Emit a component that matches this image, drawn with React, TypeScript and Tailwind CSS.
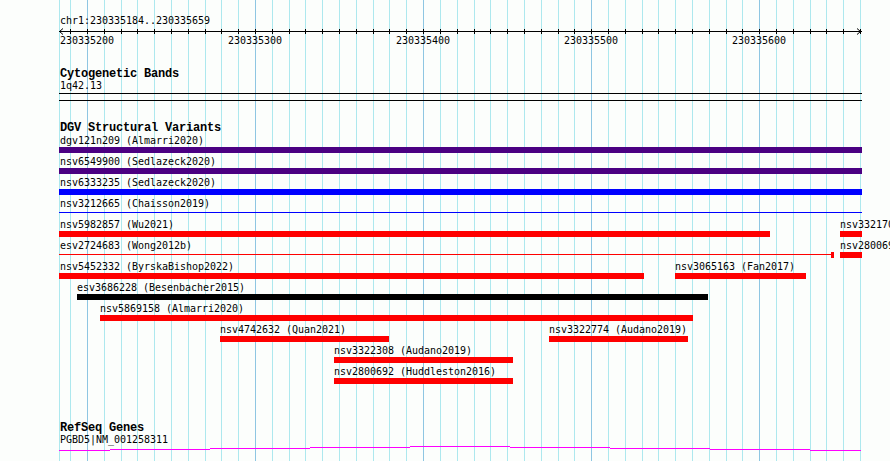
import React from "react";

const MINOR = "#ade8ee";
const MAJOR = "#8ec6e2";

const gridXs = Array.from({ length: 48 }, (_, i) => i - 1).map((k) => ({
  x: Math.floor(87.5 + 16.805 * k),
  major: k % 10 === 0,
}));

type Feat = {
  x1: number;
  x2: number;
  label: string;
  kind: "bar" | "line";
  color: string;
  cap?: number;
};

const rows: Feat[][] = [
  [{ x1: 59, x2: 862, label: "dgv121n209 (Almarri2020)", kind: "bar", color: "#4b0082" }],
  [{ x1: 59, x2: 862, label: "nsv6549900 (Sedlazeck2020)", kind: "bar", color: "#4b0082" }],
  [{ x1: 59, x2: 862, label: "nsv6333235 (Sedlazeck2020)", kind: "bar", color: "#0000ff" }],
  [{ x1: 59, x2: 862, label: "nsv3212665 (Chaisson2019)", kind: "line", color: "#0000ff" }],
  [
    { x1: 59, x2: 770, label: "nsv5982857 (Wu2021)", kind: "bar", color: "#ff0000" },
    { x1: 840, x2: 862, label: "nsv3321700 (Audano2019)", kind: "bar", color: "#ff0000" },
  ],
  [
    { x1: 59, x2: 832, label: "esv2724683 (Wong2012b)", kind: "line", color: "#ff0000", cap: 831 },
    { x1: 840, x2: 862, label: "nsv2800697 (Huddleston2016)", kind: "bar", color: "#ff0000" },
  ],
  [
    { x1: 59, x2: 644, label: "nsv5452332 (ByrskaBishop2022)", kind: "bar", color: "#ff0000" },
    { x1: 675, x2: 806, label: "nsv3065163 (Fan2017)", kind: "bar", color: "#ff0000" },
  ],
  [{ x1: 77, x2: 708, label: "esv3686228 (Besenbacher2015)", kind: "bar", color: "#000000" }],
  [{ x1: 100, x2: 693, label: "nsv5869158 (Almarri2020)", kind: "bar", color: "#ff0000" }],
  [
    { x1: 220, x2: 389, label: "nsv4742632 (Quan2021)", kind: "bar", color: "#ff0000" },
    { x1: 549, x2: 688, label: "nsv3322774 (Audano2019)", kind: "bar", color: "#ff0000" },
  ],
  [{ x1: 334, x2: 513, label: "nsv3322308 (Audano2019)", kind: "bar", color: "#ff0000" }],
  [{ x1: 334, x2: 513, label: "nsv2800692 (Huddleston2016)", kind: "bar", color: "#ff0000" }],
];

const steps: [number, number, number][] = [
  [59, 110, 450],
  [110, 210, 449],
  [210, 310, 448],
  [310, 410, 447],
  [410, 510, 446],
  [510, 610, 447],
  [610, 710, 448],
  [710, 810, 449],
  [810, 861, 450],
];

const rulerLabels = [230335200, 230335300, 230335400, 230335500, 230335600];

const small =
  "h-[12px] leading-[12px] text-[10px] tracking-[-0.02px] whitespace-nowrap font-['DejaVu_Sans_Mono','Liberation_Mono',monospace]";
const bold =
  "h-[12px] leading-[12px] text-[12px] font-bold tracking-[-0.2px] whitespace-nowrap font-['Liberation_Mono','DejaVu_Sans_Mono',monospace]";

function Row({ feats }: { feats: Feat[] }) {
  return (
    <div className="relative h-[21px] w-[803px]">
      {feats.map((f, i) => (
        <React.Fragment key={i}>
          <span
            className={`absolute top-0 ${small}`}
            style={{ left: Math.max(f.x1, 60) - 59 }}
          >
            {f.label}
          </span>
          {f.kind === "bar" ? (
            <div
              className="absolute top-[12px] h-[6px]"
              style={{ left: f.x1 - 59, width: f.x2 - f.x1, background: f.color }}
            />
          ) : (
            <div
              className="absolute top-[14px] h-px"
              style={{ left: f.x1 - 59, width: f.x2 - f.x1, background: f.color }}
            />
          )}
          {f.cap !== undefined && (
            <div
              className="absolute top-[12px] h-[6px] w-[3px]"
              style={{ left: f.cap - 59, background: f.color }}
            />
          )}
        </React.Fragment>
      ))}
    </div>
  );
}

export default function App() {
  return (
    <div className="relative w-[890px] h-[461px] overflow-hidden bg-[#fcfefc] text-black font-['DejaVu_Sans_Mono',monospace]">
      <svg className="absolute inset-0" width={890} height={461}>
        <rect x={59} y={0} width={1} height={461} fill={MINOR} />
        {gridXs.map((g, i) => (
          <rect key={i} x={g.x} y={0} width={1} height={461} fill={g.major ? MAJOR : MINOR} />
        ))}
      </svg>

      <div className="relative flex flex-col pl-[59px] w-[862px]">
        {/* Ruler */}
        <div className="pt-[15px] flex flex-col">
          <div className={`${small} pl-px`}>chr1:230335184..230335659</div>
          <svg className="mt-px" width={803} height={8} viewBox="59 28 803 8" shapeRendering="crispEdges">
            <rect x={59} y={31} width={803} height={1} fill="#000" />
            {gridXs.map((g, i) => (
              <rect key={i} x={g.x} y={29} width={1} height={5} fill="#000" />
            ))}
            <polyline points="63,28.5 59.5,31.5 63,34.5" fill="none" stroke="#000" strokeWidth={1} shapeRendering="auto" />
            <polyline points="857,28.5 860.5,31.5 857,34.5" fill="none" stroke="#000" strokeWidth={1} shapeRendering="auto" />
          </svg>
          <div className="relative h-[12px] w-[803px]">
            {rulerLabels.map((bp, i) => {
              const k = (bp - 230335200) / 10;
              const x = Math.floor(87.5 + 16.805 * k);
              return (
                <span key={i} className={`absolute top-[-1px] ${small}`} style={{ left: x - 27 - 59 }}>
                  {bp}
                </span>
              );
            })}
          </div>
        </div>

        {/* Cytogenetic Bands */}
        <div className="mt-[20px] flex flex-col">
          <div className={`${bold} pl-px`}>Cytogenetic Bands</div>
          <div className={`${small} pl-px`}>1q42.13</div>
          <div className="flex flex-col w-[803px] mt-px">
            <div className="h-px bg-black" />
            <div className="h-[6px]" />
            <div className="h-px bg-black" />
          </div>
        </div>

        {/* DGV */}
        <div className="mt-[21px] flex flex-col">
          <div className={`${bold} pl-px`}>DGV Structural Variants</div>
          <div className="mt-px flex flex-col">
            {rows.map((r, i) => (
              <Row key={i} feats={r} />
            ))}
          </div>
        </div>

        {/* RefSeq */}
        <div className="mt-[35px] flex flex-col">
          <div className={`${bold} pl-px`}>RefSeq Genes</div>
          <div className={`${small} pl-px`}>PGBD5|NM_001258311</div>
          <svg width={803} height={5} viewBox="59 446 803 5" shapeRendering="crispEdges">
            {steps.map(([a, b, y], i) => (
              <rect key={i} x={a} y={y} width={b - a} height={1} fill="#ff00ff" />
            ))}
          </svg>
        </div>
      </div>
    </div>
  );
}
